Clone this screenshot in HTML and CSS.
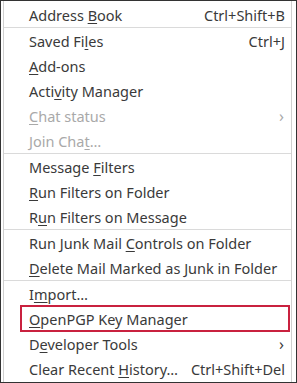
FILE: index.html
```html
<!DOCTYPE html>
<html>
<head>
<meta charset="utf-8">
<link rel="stylesheet" href="styles.css">
</head>
<body>
<div class="frame">
  <div class="menu">
    <div class="item"><span class="label">Address <u>B</u>ook</span><span class="key">Ctrl+Shift+B</span></div>
    <div class="sep"></div>
    <div class="item"><span class="label">Saved Fi<u>l</u>es</span><span class="key">Ctrl+J</span></div>
    <div class="item"><span class="label"><u>A</u>dd-ons</span></div>
    <div class="item"><span class="label">Acti<u>v</u>ity Manager</span></div>
    <div class="item disabled"><span class="label"><u>C</u>hat status</span><span class="chev">›</span></div>
    <div class="item disabled"><span class="label">Join Cha<u>t</u>…</span></div>
    <div class="sep"></div>
    <div class="item"><span class="label">Message <u>F</u>ilters</span></div>
    <div class="item"><span class="label"><u>R</u>un Filters on Folder</span></div>
    <div class="item"><span class="label">R<u>u</u>n Filters on Message</span></div>
    <div class="sep"></div>
    <div class="item"><span class="label">Run Junk Mail <u>C</u>ontrols on Folder</span></div>
    <div class="item"><span class="label"><u>D</u>elete Mail Marked as Junk in Folder</span></div>
    <div class="sep"></div>
    <div class="item"><span class="label">I<u>m</u>port…</span></div>
    <div class="item marked"><span class="label"><u>O</u>penPGP Key Manager</span><span class="mark"></span></div>
    <div class="item"><span class="label">D<u>e</u>veloper Tools</span><span class="chev">›</span></div>
    <div class="item"><span class="label">Clear Recent <u>H</u>istory…</span><span class="key">Ctrl+Shift+Del</span></div>
  </div>
</div>
</body>
</html>
```

FILE: styles.css
```css
html, body {
  margin: 0;
  padding: 0;
  background: #ffffff;
}
.frame {
  box-sizing: border-box;
  width: 297px;
  height: 383px;
  border: 1px solid #333333;
  background: #ffffff;
  padding: 0 4px 0 2px;
}
.menu {
  box-sizing: border-box;
  height: 100%;
  border-left: 1px solid #d0d0d0;
  border-right: 1px solid #d0d0d0;
  padding-top: 1px;
  display: flex;
  flex-direction: column;
  font-family: "Noto Sans", "DejaVu Sans", sans-serif;
  font-size: 14.5px;
  color: #3a3a3a;
}
.item {
  position: relative;
  height: 25px;
  display: flex;
  align-items: center;
  padding: 0 6px 0 25px;
  white-space: nowrap;
}
.label {
  flex: 1;
}
.label u {
  text-decoration-thickness: 1px;
  text-underline-offset: 2px;
}
.key {
  margin-left: 10px;
}
.chev {
  font-size: 16px;
  margin-right: 1px;
}
.disabled {
  color: #a9a9a9;
}
.sep {
  height: 1px;
  background: #dadada;
}
.mark {
  position: absolute;
  top: -1px;
  bottom: -1px;
  left: 16px;
  right: 1px;
  border: 2px solid #c9213f;
}
```
